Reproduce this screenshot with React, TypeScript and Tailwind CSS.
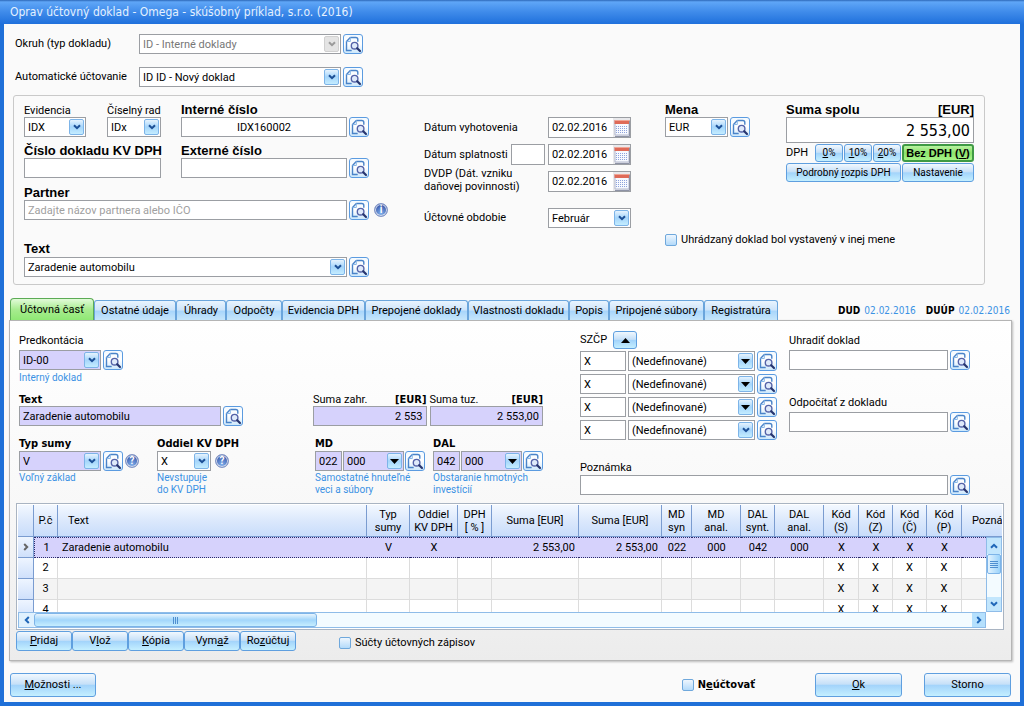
import type { ReactNode } from 'react';
import clsx from 'clsx';

const GLOSS =
  'border border-[#5f9fdf] bg-[linear-gradient(#f1f8fe_0%,#c6e0f8_46%,#a3d4fb_52%,#c4efff_100%)] text-black';
const FIELD = 'h-5 w-full min-w-0 border border-[#9b9ea3] px-[3px] outline-none';
const BIG_LABEL = "font-['Liberation_Sans',sans-serif] text-[13px] font-bold";
const BOLD = "font-['DejaVu_Sans_Condensed','DejaVu_Sans',sans-serif] font-bold leading-4";

/* ---------- icons ---------- */

function SearchIcon() {
  return (
    <svg viewBox="0 0 18 18" className="size-[18px]" fill="none">
      <path d="M6.300 2.500h5.500q2 0 2 2v2.300M6.300 2.500 2.500 6.600v8.900h5.200" stroke="#4a83c8" strokeWidth="1.400" />
      <path d="M6.300 2.500v4H2.500" stroke="#8ab8e8" strokeWidth="1" />
      <circle cx="10.600" cy="10.700" r="3.300" fill="#dfeafa" stroke="#5563a8" strokeWidth="1.400" />
      <path d="m13.200 13.200 2.800 2.800" stroke="#27356f" strokeWidth="2.200" strokeLinecap="round" />
    </svg>
  );
}

function RoundIcon({ sign, label }: { sign: string; label: string }) {
  return (
    <button
      type="button"
      aria-label={label}
      className="grid size-[14px] shrink-0 place-items-center rounded-full border border-[#8093c4] bg-[radial-gradient(circle_at_50%_80%,#7fb0ec,#3f5fb0_70%)] text-[10px] leading-none font-bold text-white ring-1 ring-[#d5dcec] ring-inset"
    >
      {sign}
    </button>
  );
}

function CalendarIcon() {
  return (
    <svg viewBox="0 0 17 19" className="h-[19px] w-[17px]">
      <path d="M0 0h17v19H0z" fill="#e9e9ec" />
      <path d="M2 3h14v14H2z" fill="#f7f9ff" stroke="#b0b6cc" />
      <path d="M1.500 2h15v4h-15z" fill="#df6a58" />
      <path d="M1.500 2h15v1h-15z" fill="#f0a596" />
      <path d="M3 8.500h12M3 10.500h12M3 12.500h12M3 14.500h12" stroke="#8ea3dc" strokeDasharray="1 1" />
      <path d="M16.500 3v15.500H2" stroke="#8e93a6" fill="none" />
    </svg>
  );
}

function Chevron({ className }: { className?: string }) {
  return (
    <svg viewBox="0 0 8 6" className={clsx('h-[6px] w-2', className)} fill="none">
      <path d="m1 1.200 3 3 3-3" stroke="currentColor" strokeWidth="2" />
    </svg>
  );
}

/* ---------- controls ---------- */

function SearchButton({ label }: { label: string }) {
  return (
    <button
      type="button"
      aria-label={`Hľadať: ${label}`}
      className="grid size-5 shrink-0 place-items-center rounded-[3px] border border-[#5b9be0] bg-[linear-gradient(#f4faff,#ffffff_50%,#cde8fc)]"
    >
      <SearchIcon />
    </button>
  );
}

interface ComboProps {
  id?: string;
  label?: string;
  value: string;
  className?: string;
  lilac?: boolean;
  disabled?: boolean;
  solid?: boolean;
}

function Combo({ id, label, value, className, lilac, disabled, solid }: ComboProps) {
  return (
    <div className={clsx('relative shrink-0', className)}>
      <select
        id={id}
        aria-label={label}
        disabled={disabled}
        className={clsx(
          FIELD,
          'block appearance-none pt-px pr-4',
          lilac ? 'bg-[#d6d2fc]' : 'bg-white',
          disabled && 'text-[#777] opacity-100',
        )}
      >
        <option>{value}</option>
      </select>
      <span
        className={clsx(
          'pointer-events-none absolute top-[2px] right-[2px] grid h-4 w-[15px] place-items-center rounded-[2px] border',
          disabled
            ? 'border-[#d0d0d0] bg-[#e4e4e4] text-[#9a9a9a]'
            : 'border-[#7db4e8] bg-[linear-gradient(#e6f3fe,#a5d5fb_50%,#c4edff)] text-[#1c4f96]',
        )}
      >
        {solid ? (
          <svg viewBox="0 0 9 5" className="h-[5px] w-[9px]">
            <path d="M0 0h9L4.500 5z" fill="#000" />
          </svg>
        ) : (
          <Chevron />
        )}
      </span>
    </div>
  );
}

interface TextFieldProps {
  id?: string;
  label?: string;
  value?: string;
  placeholder?: string;
  className?: string;
}

function TextField({ id, label, value = '', placeholder, className = 'bg-white' }: TextFieldProps) {
  return (
    <input
      id={id}
      type="text"
      aria-label={label}
      defaultValue={value}
      placeholder={placeholder}
      className={clsx(FIELD, 'placeholder:text-[#a0a0a0]', className)}
    />
  );
}

function DateField({ id }: { id: string }) {
  return (
    <div className="flex h-[21px] w-[83px] shrink-0 items-center border border-[#9b9ea3] bg-white">
      <input id={id} type="text" defaultValue="02.02.2016" className="w-[64px] min-w-0 pl-[3px] outline-none" />
      <button type="button" aria-label="Kalendár">
        <CalendarIcon />
      </button>
    </div>
  );
}

function Button({ className, children }: { className?: string; children: ReactNode }) {
  return (
    <button type="button" className={clsx(GLOSS, 'grid place-items-center rounded-[3px] whitespace-nowrap', className)}>
      <span>{children}</span>
    </button>
  );
}

function Checkbox({ id, className, children }: { id: string; className?: string; children: ReactNode }) {
  return (
    <div className={clsx('flex items-center gap-1', className)}>
      <input
        id={id}
        type="checkbox"
        className="size-3 appearance-none rounded-[2px] border border-[#6fa8dc] bg-[linear-gradient(#eef6fe,#b3dafa)] checked:bg-[#3f87d6]"
      />
      <label htmlFor={id}>{children}</label>
    </div>
  );
}

function Label({ htmlFor, className, children }: { htmlFor: string; className?: string; children: ReactNode }) {
  return (
    <label htmlFor={htmlFor} className={clsx('block h-[14px] whitespace-nowrap', className)}>
      {children}
    </label>
  );
}

function Note({ children }: { children: ReactNode }) {
  return <p className="h-6 pt-px text-[10px] leading-3 whitespace-nowrap text-[#3b92e4]">{children}</p>;
}

/* ---------- document header ---------- */

function DocumentHeader() {
  return (
    <section className="mr-[35px] ml-[9px] flex rounded-[3px] border border-[#c9c9c9] px-[10px] py-[7px]">
      <div className="w-[364px] shrink-0">
        <div className="flex">
          <div className="w-[83px]">
            <Label htmlFor="evidencia" className="leading-4">Evidencia</Label>
            <Combo id="evidencia" value="IDX" className="w-[62px]" />
          </div>
          <div className="w-[74px]">
            <Label htmlFor="rad" className="leading-4">Číselný rad</Label>
            <Combo id="rad" value="IDx" className="w-[54px]" />
          </div>
          <div>
            <Label htmlFor="interne" className={BIG_LABEL}>Interné číslo</Label>
            <div className="flex gap-[2px]">
              <div className="w-[166px]">
                <TextField id="interne" value="IDX160002" className="bg-white text-center" />
              </div>
              <SearchButton label="Interné číslo" />
            </div>
          </div>
        </div>

        <div className="mt-[7px] flex">
          <div className="w-[157px]">
            <Label htmlFor="kvdph" className={BIG_LABEL}>Číslo dokladu KV DPH</Label>
            <div className="w-[137px]">
              <TextField id="kvdph" />
            </div>
          </div>
          <div>
            <Label htmlFor="externe" className={BIG_LABEL}>Externé číslo</Label>
            <div className="flex gap-[2px]">
              <div className="w-[166px]">
                <TextField id="externe" />
              </div>
              <SearchButton label="Externé číslo" />
            </div>
          </div>
        </div>

        <Label htmlFor="partner" className={clsx('mt-2', BIG_LABEL)}>Partner</Label>
        <div className="flex items-center gap-[2px]">
          <div className="w-[323px]">
            <TextField id="partner" placeholder="Zadajte názov partnera alebo IČO" />
          </div>
          <SearchButton label="Partner" />
          <div className="ml-[3px] flex">
            <RoundIcon sign="i" label="Informácie o partnerovi" />
          </div>
        </div>

        <Label htmlFor="text" className={clsx('mt-[22px] mb-px', BIG_LABEL)}>Text</Label>
        <div className="flex gap-[2px]">
          <Combo id="text" value="Zaradenie automobilu" className="w-[323px]" />
          <SearchButton label="Text" />
        </div>
      </div>

      <div className="mt-[14px] ml-[36px] flex w-[207px] shrink-0 flex-col gap-[6px]">
        <div className="flex h-[21px] items-center justify-between">
          <label htmlFor="vyhotovenie">Dátum vyhotovenia</label>
          <DateField id="vyhotovenie" />
        </div>
        <div className="flex h-[21px] items-center gap-[3px]">
          <label htmlFor="splatnost" className="min-w-0 flex-1 whitespace-nowrap">Dátum splatnosti</label>
          <input type="text" aria-label="Počet dní splatnosti" className="h-[21px] w-[34px] border border-[#9b9ea3] bg-white px-[3px]" />
          <DateField id="splatnost" />
        </div>
        <div className="flex h-[21px] items-center justify-between">
          <label htmlFor="dvdp" className="pb-[3px] leading-[13px]">
            DVDP (Dát. vzniku
            <br />
            daňovej povinnosti)
          </label>
          <DateField id="dvdp" />
        </div>
        <div className="mt-[10px] flex items-center justify-between">
          <label htmlFor="obdobie">Účtovné obdobie</label>
          <Combo id="obdobie" value="Február" className="w-[83px]" />
        </div>
      </div>

      <div className="ml-auto w-[309px]">
        <div className="flex justify-between">
          <div>
            <Label htmlFor="mena" className={BIG_LABEL}>Mena</Label>
            <div className="flex gap-[2px]">
              <Combo id="mena" value="EUR" className="w-[63px]" />
              <SearchButton label="Mena" />
            </div>
          </div>
          <div className="w-[188px]">
            <div className={clsx('flex justify-between', BIG_LABEL)}>
              <Label htmlFor="suma">Suma spolu</Label>
              <span className="h-[14px]">[EUR]</span>
            </div>
            <input
              id="suma"
              type="text"
              defaultValue="2 553,00"
              className="h-[26px] w-full border border-[#9b9ea3] bg-white px-[3px] text-right font-['DejaVu_Sans_Condensed','DejaVu_Sans',sans-serif] text-[16px]"
            />
            <div className="mt-px flex items-center gap-px">
              <span className="flex-1">DPH</span>
              <Button className="h-[18px] w-7 text-[10px]"><u>0</u>%</Button>
              <Button className="h-[18px] w-7 text-[10px]"><u>1</u>0%</Button>
              <Button className="h-[18px] w-7 text-[10px]"><u>2</u>0%</Button>
              <button
                type="button"
                className="h-[18px] w-[72px] rounded-[3px] border-2 border-[#3f9a45] bg-[linear-gradient(#b9f2a0,#8be36c_50%,#a8f58a)] font-['Liberation_Sans',sans-serif] text-[11px] leading-3 font-bold whitespace-nowrap"
              >
                Bez DPH (<u>V</u>)
              </button>
            </div>
            <div className="mt-px flex gap-px">
              <Button className="h-[19px] flex-1 text-[10px]">Podrobný <u>r</u>ozpis DPH</Button>
              <Button className="h-[19px] w-[72px] text-[10px]">Nastavenie</Button>
            </div>
          </div>
        </div>
        <Checkbox id="ina-mena" className="mt-[51px]">Uhrádzaný doklad bol vystavený v inej mene</Checkbox>
      </div>
    </section>
  );
}

/* ---------- tabs ---------- */

const TABS = [
  { name: 'Ostatné údaje', width: 'w-[82px]' },
  { name: 'Úhrady', width: 'w-[50px]' },
  { name: 'Odpočty', width: 'w-[56px]' },
  { name: 'Evidencia DPH', width: 'w-[83px]' },
  { name: 'Prepojené doklady', width: 'w-[103px]' },
  { name: 'Vlastnosti dokladu', width: 'w-[101px]' },
  { name: 'Popis', width: 'w-[40px]' },
  { name: 'Pripojené súbory', width: 'w-[95px]' },
  { name: 'Registratúra', width: 'w-[74px]' },
];

function TabBar() {
  return (
    <div className="mt-[13px] flex h-[22px] items-end pr-[10px] pl-[6px]">
      <div role="tablist" className="flex items-end">
        <button
          type="button"
          role="tab"
          aria-selected="true"
          className="mr-px h-[22px] w-[84px] rounded-t-[4px] border border-b-0 border-[#5cab55] bg-[linear-gradient(#e2fbd9,#a8ec90_50%,#8fe874)] whitespace-nowrap"
        >
          Účtovná časť
        </button>
        {TABS.map((tab) => (
          <button
            key={tab.name}
            type="button"
            role="tab"
            aria-selected="false"
            className={clsx(
              'mr-px -ml-px h-5 rounded-t-[3px] border border-b-0 border-[#6aa5dc] bg-[linear-gradient(#e9f4fe,#cfe5fa_45%,#a9d6fb_55%,#c6e6fb)] whitespace-nowrap',
              tab.width,
            )}
          >
            {tab.name}
          </button>
        ))}
      </div>
      <p className="ml-auto flex gap-1 pb-px font-['DejaVu_Sans_Condensed','DejaVu_Sans',sans-serif] text-[10px] leading-4 whitespace-nowrap">
        <b>DUD</b>
        <span className="mr-[6px] text-[#3b92e4]">02.02.2016</span>
        <b>DUÚP</b>
        <span className="text-[#3b92e4]">02.02.2016</span>
      </p>
    </div>
  );
}

/* ---------- posting form ---------- */

function AccountField({ name, syn, note }: { name: string; syn: string; note: ReactNode }) {
  return (
    <div className="w-[112px]">
      <Label htmlFor={name} className={clsx('mb-px', BOLD)}>{name}</Label>
      <div className="flex gap-px">
        <div className="w-[27px] shrink-0">
          <TextField id={name} value={syn} className="bg-[#d6d2fc]" />
        </div>
        <Combo label={`${name} analytika`} value="000" className="w-[61px]" lilac solid />
        <SearchButton label={name} />
      </div>
      <Note>{note}</Note>
    </div>
  );
}

function PostingForm() {
  return (
    <div className="flex pl-[9px]">
      <div className="w-[526px] shrink-0 pt-[13px]">
        <Label htmlFor="predkontacia" className="mb-[2px]">Predkontácia</Label>
        <div className="flex gap-[2px]">
          <Combo id="predkontacia" value="ID-00" className="w-[82px]" lilac />
          <SearchButton label="Predkontácia" />
        </div>
        <p className="mt-[2px] h-5 text-[10px] leading-3 text-[#3b92e4]">Interný doklad</p>

        <div className="flex">
          <div className="w-[294px]">
            <Label htmlFor="text2" className={BOLD}>Text</Label>
            <div className="flex gap-[2px]">
              <div className="w-[202px]">
                <TextField id="text2" value="Zaradenie automobilu" className="bg-[#d6d2fc]" />
              </div>
              <SearchButton label="Text zápisu" />
            </div>
          </div>
          <div className="flex flex-1 gap-[3px] pr-[2px]">
            {[
              ['Suma zahr.', '2 553', 'zahr'],
              ['Suma tuz.', '2 553,00', 'tuz'],
            ].map(([label, value, id]) => (
              <div key={id} className="flex-1">
                <div className="flex justify-between">
                  <Label htmlFor={id} className="leading-4">{label}</Label>
                  <b className={clsx('h-[14px]', BOLD)}>[EUR]</b>
                </div>
                <TextField id={id} value={value} className="bg-[#d6d2fc] text-right" />
              </div>
            ))}
          </div>
        </div>

        <div className="mt-[10px] flex">
          <div className="w-[138px]">
            <Label htmlFor="typ" className={clsx('mb-px', BOLD)}>Typ sumy</Label>
            <div className="flex items-center gap-[2px]">
              <Combo id="typ" value="V" className="w-[82px]" lilac />
              <SearchButton label="Typ sumy" />
              <RoundIcon sign="?" label="Pomoc k typu sumy" />
            </div>
            <Note>Voľný základ</Note>
          </div>
          <div className="w-[158px]">
            <Label htmlFor="oddiel" className={clsx('mb-px', BOLD)}>Oddiel KV DPH</Label>
            <div className="flex items-center gap-1">
              <Combo id="oddiel" value="X" className="w-[54px]" />
              <RoundIcon sign="?" label="Pomoc k oddielu" />
            </div>
            <Note>Nevstupuje<br />do KV DPH</Note>
          </div>
          <div className="flex gap-[6px]">
            <AccountField name="MD" syn="022" note={<>Samostatné hnuteľné<br />veci a súbory</>} />
            <AccountField name="DAL" syn="042" note={<>Obstaranie hmotných<br />investícií</>} />
          </div>
        </div>
      </div>

      <div className="ml-[35px] flex-1 pt-[10px] pr-[41px]">
        <div className="flex gap-3">
          <div className="w-[197px] shrink-0">
            <div className="mb-[2px] flex h-[18px] items-center">
              <span className="w-[33px]">SZČP</span>
              <button type="button" aria-label="Zbaliť SZČP" className={clsx(GLOSS, 'grid h-[18px] w-6 place-items-center rounded-[3px]')}>
                <svg viewBox="0 0 9 5" className="h-[5px] w-[9px]">
                  <path d="M0 5h9L4.500 0z" />
                </svg>
              </button>
            </div>
            <div className="flex flex-col gap-[3px]">
              {['Stredisko', 'Zákazka', 'Činnosť', 'Pracovník'].map((name, i) => (
                <div key={name} className="flex gap-[2px]">
                  <div className="w-[46px]">
                    <TextField label={`${name} kód`} value="X" />
                  </div>
                  <Combo label={name} value="(Nedefinované)" className="w-[127px]" solid={i < 3} />
                  <SearchButton label={name} />
                </div>
              ))}
            </div>
          </div>
          <div className="flex-1 pt-[3px]">
            <Label htmlFor="uhradit" className="mb-[2px]">Uhradiť doklad</Label>
            <div className="flex gap-[2px]">
              <TextField id="uhradit" />
              <SearchButton label="Uhradiť doklad" />
            </div>
            <Label htmlFor="odpocitat" className="mt-[25px] mb-[3px] leading-4">Odpočítať z dokladu</Label>
            <div className="flex gap-[2px]">
              <TextField id="odpocitat" />
              <SearchButton label="Odpočítať z dokladu" />
            </div>
          </div>
        </div>
        <Label htmlFor="poznamka" className="mt-5 mb-px leading-4">Poznámka</Label>
        <div className="flex gap-[2px]">
          <TextField id="poznamka" />
          <SearchButton label="Poznámka" />
        </div>
      </div>
    </div>
  );
}

/* ---------- grid ---------- */

const COLUMNS = [
  { head: ['P.č'], width: 'w-6' },
  { head: ['Text'], width: '' },
  { head: ['Typ', 'sumy'], width: 'w-[43px]' },
  { head: ['Oddiel', 'KV DPH'], width: 'w-12' },
  { head: ['DPH', '[ % ]'], width: 'w-[34px]' },
  { head: ['Suma [EUR]'], width: 'w-[87px]' },
  { head: ['Suma [EUR]'], width: 'w-[83px]' },
  { head: ['MD', 'syn'], width: 'w-[30px]' },
  { head: ['MD', 'anal.'], width: 'w-[49px]' },
  { head: ['DAL', 'synt.'], width: 'w-[34px]' },
  { head: ['DAL', 'anal.'], width: 'w-[49px]' },
  { head: ['Kód', '(S)'], width: 'w-[35px]' },
  { head: ['Kód', '(Z)'], width: 'w-[34px]' },
  { head: ['Kód', '(Č)'], width: 'w-[34px]' },
  { head: ['Kód', '(P)'], width: 'w-[35px]' },
  { head: ['Poznámka'], width: 'w-10' },
];

const FIRST_ROW = ['1', 'Zaradenie automobilu', 'V', 'X', '', '2 553,00', '2 553,00', '022', '000', '042', '000', 'X', 'X', 'X', 'X', ''];
const emptyRow = (n: number) => [String(n), '', '', '', '', '', '', '', '', '', '', 'X', 'X', 'X', 'X', ''];
const ROWS = [FIRST_ROW, emptyRow(2), emptyRow(3), emptyRow(4)];

function cellAlign(col: number) {
  if (col === 1) return 'text-left pl-1';
  if (col === 5 || col === 6) return 'text-right pr-1';
  return 'text-center';
}

function PostingTable() {
  return (
    <div className="mr-[7px] ml-[6px] mt-2 border border-[#a9b4c2] bg-white p-px">
      <div className="relative h-[107px] overflow-hidden">
        <table className="w-full table-fixed border-separate border-spacing-0">
          <thead>
            <tr className="h-8 bg-[linear-gradient(#f3f8ff,#dbe8fc_50%,#c7dcfb)] leading-[13px]">
              <th className="w-4 border-r border-b border-[#7a9cd0]" aria-label="Označenie" />
              {COLUMNS.map((col, i) => (
                <th
                  key={i}
                  className={clsx(
                    'border-r border-b border-[#7a9cd0] p-0 font-normal whitespace-nowrap last:border-r-0',
                    col.width,
                    (i === 1 || i === 15) && 'pl-[10px] text-left',
                  )}
                >
                  {col.head.map((line) => (
                    <span key={line} className="block">{line}</span>
                  ))}
                </th>
              ))}
            </tr>
          </thead>
          <tbody>
            {ROWS.map((row, r) => (
              <tr key={r} className={clsx('h-[21px]', r === 0 ? 'bg-[#d6d2fc]' : r === 2 ? 'bg-[#f4f4f4]' : 'bg-white')}>
                <td className="border-r border-b border-[#7a9cd0] bg-[linear-gradient(#eef5ff,#cfe0fb)] p-0 text-[#666]">
                  {r === 0 && <Chevron className="mx-auto -rotate-90" />}
                </td>
                {row.map((cell, c) => (
                  <td
                    key={c}
                    className={clsx(
                      'p-0',
                      cellAlign(c),
                      r === 0
                        ? 'border-y border-dotted border-y-[#2b2b6b]'
                        : 'border-r border-b border-[#dcdcdc]',
                      r === 0 && c === 0 && 'border-l border-l-[#2b2b6b]',
                    )}
                  >
                    {cell}
                  </td>
                ))}
              </tr>
            ))}
          </tbody>
        </table>

        {/* vertical scrollbar floats over the last column */}
        <div className="absolute top-8 right-0 bottom-0 flex w-4 flex-col border border-[#8fbce8] bg-[#f3fbff] text-[#1f66b8]">
          <button type="button" aria-label="Hore" className="grid h-4 place-items-center bg-[#c2e6fd]">
            <Chevron className="rotate-180" />
          </button>
          <div className="grid h-5 place-items-center rounded-[2px] border border-[#7db4e8] bg-[linear-gradient(90deg,#e3f3fe,#9bd3fb)]">
            <span className="h-[7px] w-2 bg-[repeating-linear-gradient(#4f8fd0_0_1px,transparent_1px_2px)]" />
          </div>
          <button type="button" aria-label="Dole" className="mt-auto grid h-[14px] place-items-center bg-[#c2e6fd]">
            <Chevron />
          </button>
        </div>
      </div>

      <div className="mr-4 flex h-4 border border-[#8fbce8] bg-[#f3fbff] text-[#1f66b8]">
        <button type="button" aria-label="Doľava" className="grid w-[15px] place-items-center bg-[#dff1fe]">
          <Chevron className="rotate-90" />
        </button>
        <div className="grid w-[283px] place-items-center rounded-[3px] border border-[#7db4e8] bg-[linear-gradient(#e8f5fe,#a2d6fb_50%,#c6eeff)]">
          <span className="h-[7px] w-[6px] bg-[repeating-linear-gradient(90deg,#4f8fd0_0_1px,transparent_1px_2px)]" />
        </div>
        <button type="button" aria-label="Doprava" className="ml-auto grid w-[13px] place-items-center bg-[#b5e0fd]">
          <Chevron className="-rotate-90" />
        </button>
      </div>
    </div>
  );
}

/* ---------- window ---------- */

export default function App() {
  return (
    <div className="flex min-h-screen flex-col border-x-4 border-b-4 border-[#1f70d8] bg-[#fafafa] font-['Roboto','DejaVu_Sans_Condensed',sans-serif] text-[11px] leading-[14px] text-black">
      <header className="-mx-1 flex h-6 items-center bg-[linear-gradient(#2d68b8_0%,#5fa6f7_8%,#3f8bea_50%,#1f70dc_100%)] px-[10px]">
        <h1 className="font-['DejaVu_Sans_Condensed','DejaVu_Sans',sans-serif] text-[12px] text-[#e4f1ff]">
          Oprav účtovný doklad - Omega - skúšobný príklad, s.r.o. (2016)
        </h1>
      </header>

      <main className="pt-[10px]">
        <div className="mb-2 flex flex-col gap-[13px] pl-[11px]">
          <div className="flex items-center">
            <label htmlFor="okruh" className="w-[124px]">Okruh (typ dokladu)</label>
            <Combo id="okruh" value="ID - Interné doklady" className="mr-[2px] w-[202px]" disabled />
            <SearchButton label="Okruh" />
          </div>
          <div className="flex items-center">
            <label htmlFor="auto" className="w-[124px]">Automatické účtovanie</label>
            <Combo id="auto" value="ID ID - Nový doklad" className="mr-[2px] w-[202px]" />
            <SearchButton label="Automatické účtovanie" />
          </div>
        </div>

        <DocumentHeader />
        <TabBar />

        <section className="mr-2 ml-[5px] border border-[#b5b5b5] bg-[linear-gradient(#ffffff,#f8f8f8_55%,#ececec)] pb-[9px] shadow-[1px_1px_2px_#bbb]">
          <PostingForm />
          <PostingTable />
          <div className="mt-px flex items-center pl-[6px]">
            <div className="flex">
              <Button className="h-5 w-14"><u>P</u>ridaj</Button>
              <Button className="h-5 w-14">V<u>l</u>ož</Button>
              <Button className="h-5 w-14"><u>K</u>ópia</Button>
              <Button className="h-5 w-14">Vym<u>a</u>ž</Button>
              <Button className="h-5 w-14">Ro<u>z</u>účtuj</Button>
            </div>
            <Checkbox id="sucty" className="ml-[43px] pt-1">Súčty účtovných zápisov</Checkbox>
          </div>
        </section>
      </main>

      <footer className="flex items-center pt-3 pr-[9px] pb-[5px] pl-[6px]">
        <Button className="h-6 w-[86px]"><u>M</u>ožnosti ...</Button>
        <Checkbox id="neuctovat" className={clsx('mr-[60px] ml-auto', BOLD)}>N<u>e</u>účtovať</Checkbox>
        <Button className="mr-[22px] h-6 w-[87px]"><u>O</u>k</Button>
        <Button className="h-6 w-[87px]">Storno</Button>
      </footer>
    </div>
  );
}
